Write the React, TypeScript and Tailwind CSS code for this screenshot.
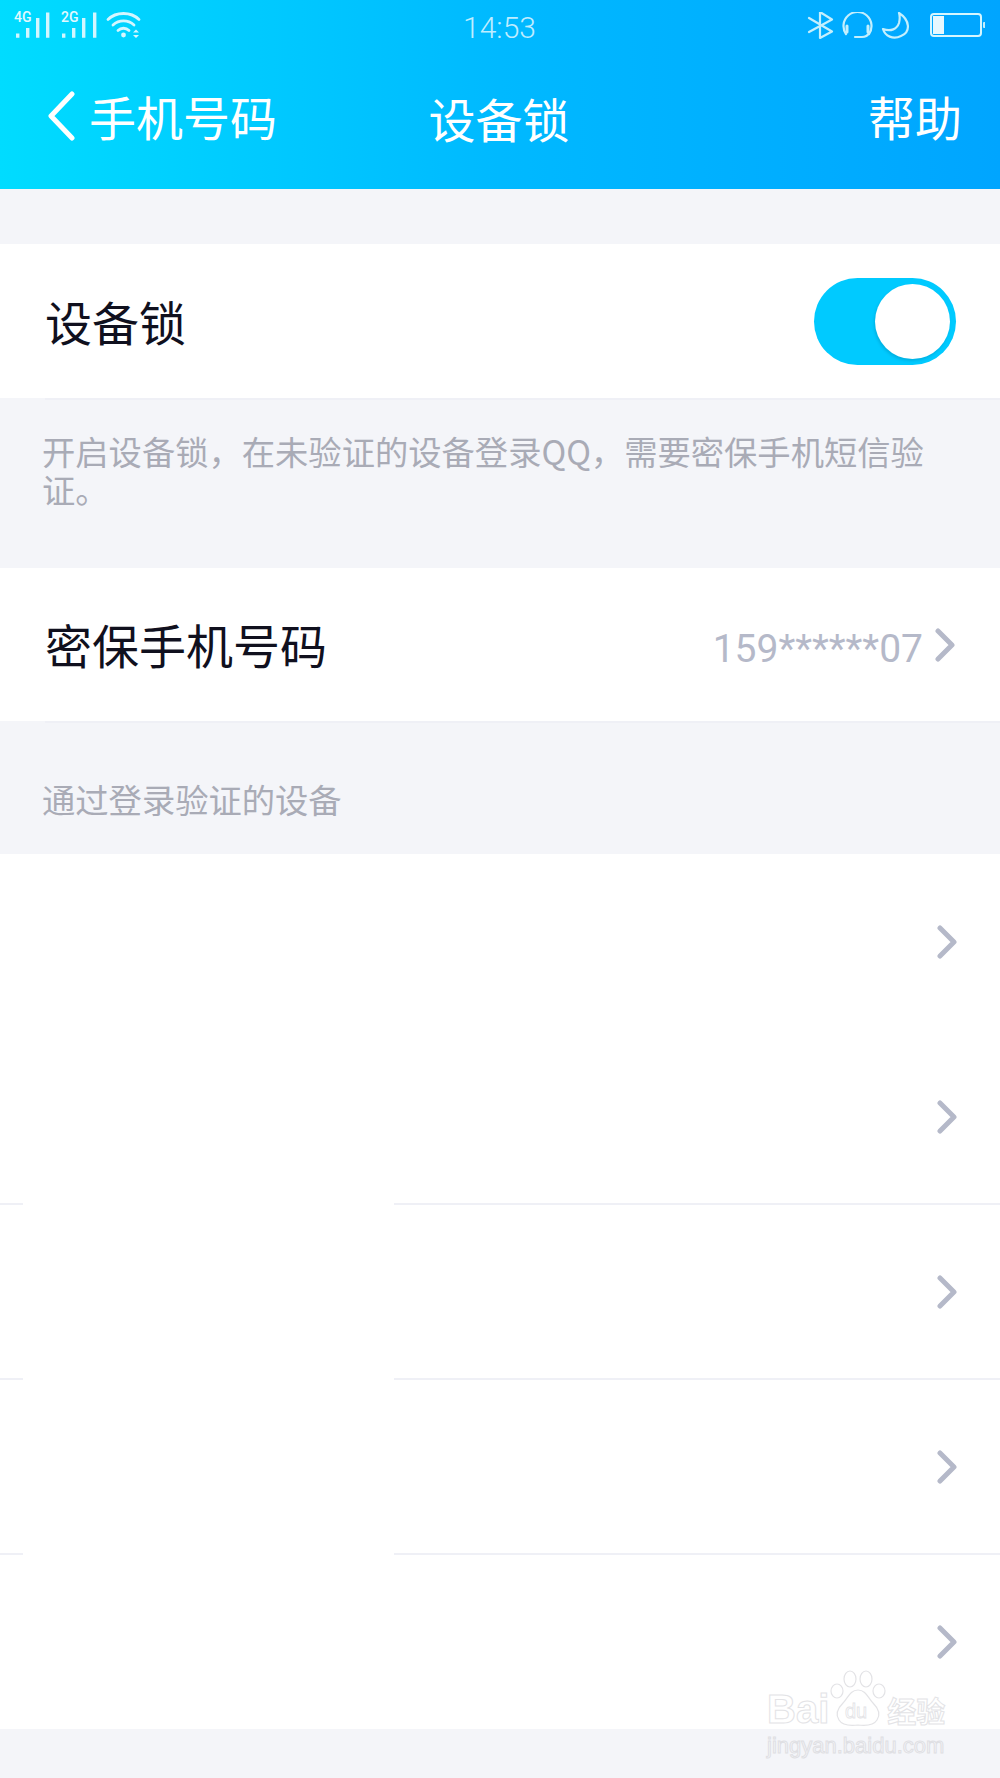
const cjk = "font-['Noto_Sans_CJK_SC','Noto_Sans',sans-serif]";

function Chevron({ className }: { className?: string }) {
  return (
    <svg className={className} width="20" height="34" viewBox="0 0 20 34" fill="none">
      <path d="M3 3l14 14L3 31" stroke="#b5b9c9" strokeWidth="5" strokeLinecap="round" strokeLinejoin="round" />
    </svg>
  );
}

function SignalIcons() {
  return (
    <svg width="130" height="34" viewBox="0 -4 130 34" fill="none" className="text-white">
      <text x="0" y="10" fontSize="14" fontWeight="500" fontFamily="Roboto, sans-serif" fill="#e2f9ff">4G</text>
      <path d="M2 21.5h3.4v4.2H2zM12 16h3.4v9.7H12zM22 6h3.4v19.7H22zM32 .6h3.4v25.1H32z" fill="#d2f6ff" />
      <text x="47" y="10" fontSize="14" fontWeight="500" fontFamily="Roboto, sans-serif" fill="#e2f9ff">2G</text>
      <path d="M48 21.5h3.4v4.2H48zM58 16h3.4v9.7H58zM68 6h3.4v19.7H68zM79 .6h3.4v25.1H79z" fill="#d2f6ff" />
      <g stroke="#d5f6ff" strokeWidth="2.8" strokeLinecap="round">
        <path d="M94 7.5C102 -.5 117 -.5 125 7.5" />
        <path d="M99 13C105 7.5 114 7.5 120 13" />
        <path d="M104 18.5C107 15.5 112 15.5 115 18.5" />
      </g>
      <circle cx="109.5" cy="23" r="2.4" fill="#d5f6ff" />
      <path d="M119 20.5h6l-3-3zM119 23h6l-3 3z" fill="#d5f6ff" />
    </svg>
  );
}

function StatusRight() {
  return (
    <svg width="178" height="30" viewBox="0 0 178 30" fill="none">
      <g stroke="#c4effd" strokeWidth="2.2" strokeLinecap="round" strokeLinejoin="round">
        <path d="M2 20L25 7.5L13 0v26l12-6.5L2 6" />
        <path d="M39 22A14 14 0 1 1 62 22" />
        <path d="M40 14v6M61 14v6" strokeWidth="3" />
        <path d="M48 25h7c3 0 6-2 7-4" />
        <path d="M92 1C103 8 104 20 94 24C86 28 78 24 76 17C84 20 90 17 92 11C93 7 93 4 92 1z" />
      </g>
      <rect x="124" y="2" width="50" height="22" rx="3" stroke="#d5f6ff" strokeWidth="2" />
      <rect x="126" y="4" width="11" height="18" fill="#e6f8ff" />
      <rect x="176" y="10" width="2.5" height="6" rx="1" fill="#c4effd" />
    </svg>
  );
}

function Divider() {
  return (
    <div className="flex h-[2px] shrink-0">
      <div className="w-[23px] bg-[#eff0f6]" />
      <div className="w-[371px]" />
      <div className="flex-1 bg-[#eff0f6]" />
    </div>
  );
}

function DeviceRow({ className }: { className: string }) {
  return (
    <div className={`flex items-center justify-end pr-[43px] ${className}`}>
      <Chevron />
    </div>
  );
}

function Watermark() {
  return (
    <div className="absolute left-[767px] top-[1672px] w-[180px]">
      <div className="flex h-[56px] items-end">
        <span className="font-['Liberation_Sans',sans-serif] text-[40px] leading-[38px] font-bold text-transparent [-webkit-text-stroke:1px_#e3e3e6]">
          Bai
        </span>
        <svg width="58" height="58" viewBox="0 0 58 58" fill="none" stroke="#e3e3e6" strokeWidth="1.2" className="shrink-0">
          <ellipse cx="8" cy="21" rx="6" ry="7" />
          <ellipse cx="21" cy="9" rx="6" ry="8" />
          <ellipse cx="37" cy="9" rx="6" ry="8" />
          <ellipse cx="50" cy="21" rx="6" ry="7" />
          <path d="M29 20c8 0 10 8 15 13 6 6 8 11 4 17-3 5-10 6-19 5-9 1-16 0-19-5-4-6-2-11 4-17 5-5 7-13 15-13z" />
          <text x="16" y="48" fontSize="20" fontFamily="Liberation Sans, sans-serif" strokeWidth="0.8">du</text>
        </svg>
        <span className={`${cjk} text-[29px] leading-[36px] font-bold text-transparent [-webkit-text-stroke:1px_#e3e3e6]`}>
          经验
        </span>
      </div>
      <div className="mt-[5px] font-['Liberation_Sans',sans-serif] text-[22px] leading-[26px] whitespace-nowrap text-transparent [-webkit-text-stroke:1px_#dfdfe3]">
        jingyan.baidu.com
      </div>
    </div>
  );
}

export default function App() {
  return (
    <div className={`relative flex h-[1778px] w-[1000px] flex-col overflow-hidden bg-[#f4f5f9] ${cjk}`}>
      <header className="h-[189px] shrink-0 bg-linear-to-r from-[#00dcff] via-[#00b9ff] to-[#00a5ff] text-white">
        <div className="grid h-[54px] grid-cols-[1fr_auto_1fr] items-start pt-[8px] pr-[15px] pl-[14px]">
          <SignalIcons />
          <span className="pt-[4px] font-['Roboto',sans-serif] text-[30px] leading-[31px] font-light text-white/75">14:53</span>
          <div className="flex justify-end pt-[4px]">
            <StatusRight />
          </div>
        </div>
        <div className="grid h-[135px] grid-cols-[1fr_auto_1fr] items-center pr-[50px] pb-[11px] pl-[48px] text-[47px] leading-[60px]">
          <div className="flex items-center gap-[14px] whitespace-nowrap">
            <svg width="27" height="50" viewBox="0 0 27 50" fill="none" className="shrink-0">
              <path d="M24 3L3 25l21 22" stroke="#fff" strokeWidth="5" strokeLinecap="round" strokeLinejoin="round" />
            </svg>
            手机号码
          </div>
          <div className="pt-[4px] text-center">设备锁</div>
          <div className="-mr-[12px] text-right">帮助</div>
        </div>
      </header>

      <div className="mt-[55px] flex h-[154px] shrink-0 items-center justify-between bg-white pr-[44px] pl-[45px]">
        <span className="text-[47px] text-[#10101e]">设备锁</span>
        <div className="flex h-[87px] w-[142px] items-center justify-end rounded-full bg-[#00caff] pr-[6px]">
          <div className="h-[75px] w-[75px] rounded-full bg-white shadow-[-1px_2px_3px_rgba(0,60,90,0.18)]" />
        </div>
      </div>
      <div className="ml-[45px] h-[2px] shrink-0 bg-[#eff0f6]" />

      <p className="h-[168px] shrink-0 pt-[32px] pr-[60px] pl-[42px] text-[33.3px] leading-[38px] text-[#a9abb6]">
        开启设备锁，在未验证的设备登录QQ，需要密保手机短信验证。
      </p>

      <div className="flex h-[153px] shrink-0 items-center justify-between bg-white pr-[45px] pl-[45px]">
        <span className="text-[47px] text-[#10101e]">密保手机号码</span>
        <div className="flex items-center gap-[12px]">
          <span className="pt-[9px] font-['Roboto',sans-serif] text-[39px] text-[#b5b9c9]">159******07</span>
          <Chevron />
        </div>
      </div>
      <div className="ml-[45px] h-[2px] shrink-0 bg-[#eff0f6]" />

      <div className="flex h-[131px] shrink-0 items-end pb-[36px] pl-[42px] text-[33.3px] leading-[38px] text-[#a9abb6]">
        通过登录验证的设备
      </div>

      <div className="flex h-[875px] shrink-0 flex-col bg-white">
        <DeviceRow className="h-[176px]" />
        <DeviceRow className="h-[173px]" />
        <Divider />
        <DeviceRow className="h-[173px]" />
        <Divider />
        <DeviceRow className="h-[173px]" />
        <Divider />
        <DeviceRow className="h-[174px]" />
      </div>

      <Watermark />
    </div>
  );
}
